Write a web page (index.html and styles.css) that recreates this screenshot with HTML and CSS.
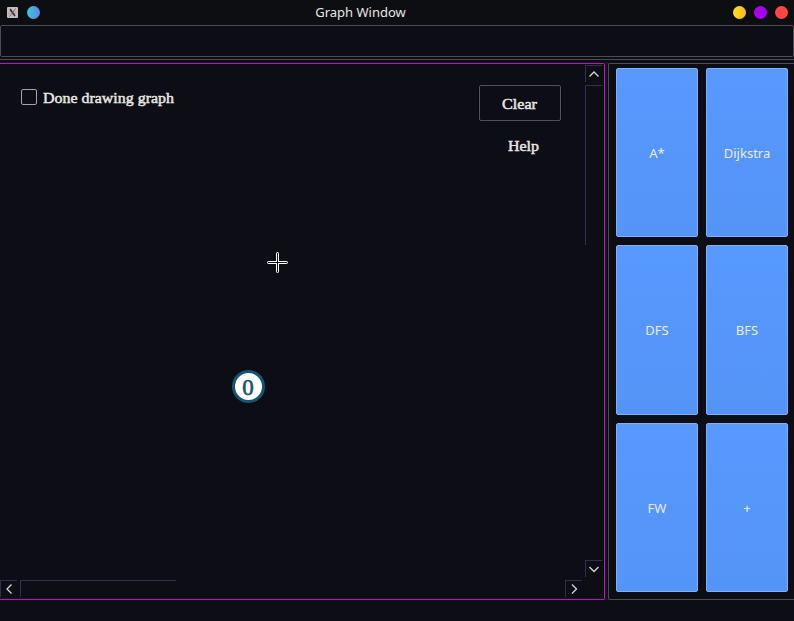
FILE: index.html
```html
<!DOCTYPE html>
<html lang="en">
<head>
<meta charset="utf-8">
<title>Graph Window</title>
<link rel="stylesheet" href="styles.css">
</head>
<body>
<header class="titlebar">
  <div class="side">
    <svg class="app-icon" width="11" height="11" viewBox="0 0 11 11"><rect width="11" height="11" rx="1" fill="#bfc0c1"/><path d="M1.500 7.500Q1 4.500 4 4.500M7 7Q9.500 6 9 4" fill="none" stroke="#e58a78"/><path d="M3 2L8 9" stroke="#333" stroke-width="1.700"/><path d="M8.500 1.500L2.500 9.500" stroke="#555" stroke-width=".8"/></svg>
    <span class="dot blue"></span>
  </div>
  <h1 class="title">Graph Window</h1>
  <div class="side right">
    <span class="dot yellow"></span><span class="dot purple"></span><span class="dot red"></span>
  </div>
</header>
<div class="toolbar"></div>
<main class="workspace">
  <section class="canvas-panel">
    <div class="canvas">
      <div class="controls">
        <label class="done"><span class="checkbox"></span><svg width="133" height="24"><text x="0" y="17" textLength="131" lengthAdjust="spacingAndGlyphs">Done drawing graph</text></svg></label>
        <div class="actions">
          <button class="clear"><svg width="36" height="22"><text x="0" y="16" textLength="35" lengthAdjust="spacingAndGlyphs">Clear</text></svg></button>
          <span class="help"><svg width="34" height="24"><text x="0" y="17" textLength="31" lengthAdjust="spacingAndGlyphs">Help</text></svg></span>
        </div>
      </div>
      <svg class="cursor" width="21" height="21" viewBox="0 0 21 21"><rect x="9.500" y=".5" width="2" height="20" rx=".7"/><rect x=".5" y="9.500" width="20" height="2" rx=".7"/><path d="M10.500 1v19M1 10.500h19"/></svg>
      <div class="node"><span>0</span></div>
    </div>
    <div class="vscroll">
      <div class="arrow"><svg width="10" height="7" viewBox="0 0 10 7"><path d="M.5 5.500L5 1L9.500 5.500"/></svg></div>
      <div class="vthumb"></div>
      <div class="arrow end"><svg width="10" height="7" viewBox="0 0 10 7"><path d="M.5 1L5 5.500L9.500 1"/></svg></div>
    </div>
    <div class="hscroll">
      <div class="arrow"><svg width="7" height="10" viewBox="0 0 7 10"><path d="M5.500 .5L1 5L5.500 9.500"/></svg></div>
      <div class="hthumb"></div>
      <div class="arrow last"><svg width="7" height="10" viewBox="0 0 7 10"><path d="M1 .5L5.500 5L1 9.500"/></svg></div>
    </div>
  </section>
  <section class="algorithms">
    <button>A*</button><button>Dijkstra</button>
    <button>DFS</button><button>BFS</button>
    <button class="low">FW</button><button class="low">+</button>
  </section>
</main>
</body>
</html>
```
FILE: styles.css
```css
* { box-sizing: border-box; }
body {
  margin: 0;
  width: 794px;
  height: 621px;
  overflow: hidden;
  background: #0c0d15;
  color: #e6e6e6;
  font: 13px "Noto Sans", sans-serif;
}
svg { display: block; }
.titlebar {
  display: grid;
  grid-template-columns: 1fr auto 1fr;
  align-items: center;
  height: 25px;
  padding: 0 6px 0 7px;
  background: #0d0e12;
}
.title { margin: 0; transform: translateX(-37px); font-size: 13px; font-weight: 400; line-height: 25px; }
.side { display: flex; align-items: center; gap: 9px; }
.right { justify-content: flex-end; gap: 8px; }
.dot { width: 13px; height: 13px; border-radius: 50%; }
.blue { background: linear-gradient(90deg, #35c8dc, #6485e4); }
.yellow { background: linear-gradient(90deg, #fae51a, #ffb525); }
.purple { background: linear-gradient(90deg, #b900d5, #9d00ff); }
.red { background: linear-gradient(90deg, #ff3f5b, #ff4b29); }
.toolbar { height: 32px; border: 1px solid #4c4d51; border-radius: 2px; }
.workspace {
  display: flex;
  gap: 3px;
  margin-top: 2px;
  padding-top: 3px;
  height: 541px;
  border-top: 1px solid #4c4d51;
}
.canvas-panel {
  display: grid;
  grid-template: 515px 20px / 585px 19px;
  width: 605px;
  height: 537px;
  border: 1px solid #c40cca;
  border-left: 0;
  border-radius: 0 2px 2px 0;
}
.canvas { position: relative; }
.controls { display: flex; justify-content: space-between; padding: 21px 24px 0 21px; }
.done { display: flex; align-items: flex-start; gap: 6px; padding-top: 4px; }
.checkbox { width: 16px; height: 16px; border: 1px solid #a4a4a6; border-radius: 2px; }
.done svg { margin-top: -3px; }
text {
  font: 15.5px "Liberation Serif", serif;
  fill: #e9e6e1;
  stroke: #e9e6e1;
  stroke-width: .5px;
}
.actions { display: flex; flex-direction: column; width: 82px; }
.clear {
  display: flex;
  align-items: center;
  justify-content: center;
  height: 36px;
  padding: 0;
  border: 1px solid #515256;
  border-radius: 2px;
  background: none;
}
.clear svg { margin-top: 1px; }
.help { padding: 13px 0 0 29px; }
.cursor { position: absolute; left: 267px; top: 188px; }
.cursor rect { fill: #0c0d15; stroke: #fff; }
.cursor path { stroke: #0c0d15; }
.node {
  position: absolute;
  left: 231.5px;
  top: 305.500px;
  display: flex;
  justify-content: center;
  width: 33px;
  height: 33px;
  border: 3px solid #125672;
  border-radius: 50%;
  background: #fff;
  color: #125672;
  font: 23px/30px "Liberation Serif", serif;
  -webkit-text-stroke: .6px #125672;
}
.vscroll { display: flex; flex-direction: column; padding-top: 1px; }
.arrow {
  display: flex;
  align-items: center;
  justify-content: center;
  width: 17px;
  height: 17px;
  border: solid #2d3050;
  border-width: 1px 0 0 1px;
}
.arrow path { fill: none; stroke: #d5d5d7; stroke-width: 1.3; }
.vthumb { width: 17px; height: 160px; margin-top: 3px; border: solid #2d3050; border-width: 1px 0 0 1px; }
.end { margin-top: auto; margin-bottom: 2px; }
.hscroll { grid-column: 1 / -1; display: flex; padding-top: 1px; }
.hthumb { width: 156px; height: 17px; margin-left: 3px; border: solid #2d3050; border-width: 1px 0 0 1px; }
.last { margin-left: auto; margin-right: 22px; }
.algorithms {
  display: grid;
  grid-template: repeat(3, 1fr) / 82px 82px;
  gap: 8px;
  width: 186px;
  height: 537px;
  padding: 4px 0 7px 7px;
  border: 1px solid #4c4d51;
  border-right: 0;
  border-radius: 2px 0 0 2px;
}
.algorithms button {
  padding: 0;
  border: 1px solid #7fb0f7;
  border-radius: 2px;
  background: linear-gradient(#5799ff, #5594f7);
  color: #e9eaf0;
  font: 13px "Noto Sans", sans-serif;
}
.algorithms .low { padding-top: 1px; }
```
